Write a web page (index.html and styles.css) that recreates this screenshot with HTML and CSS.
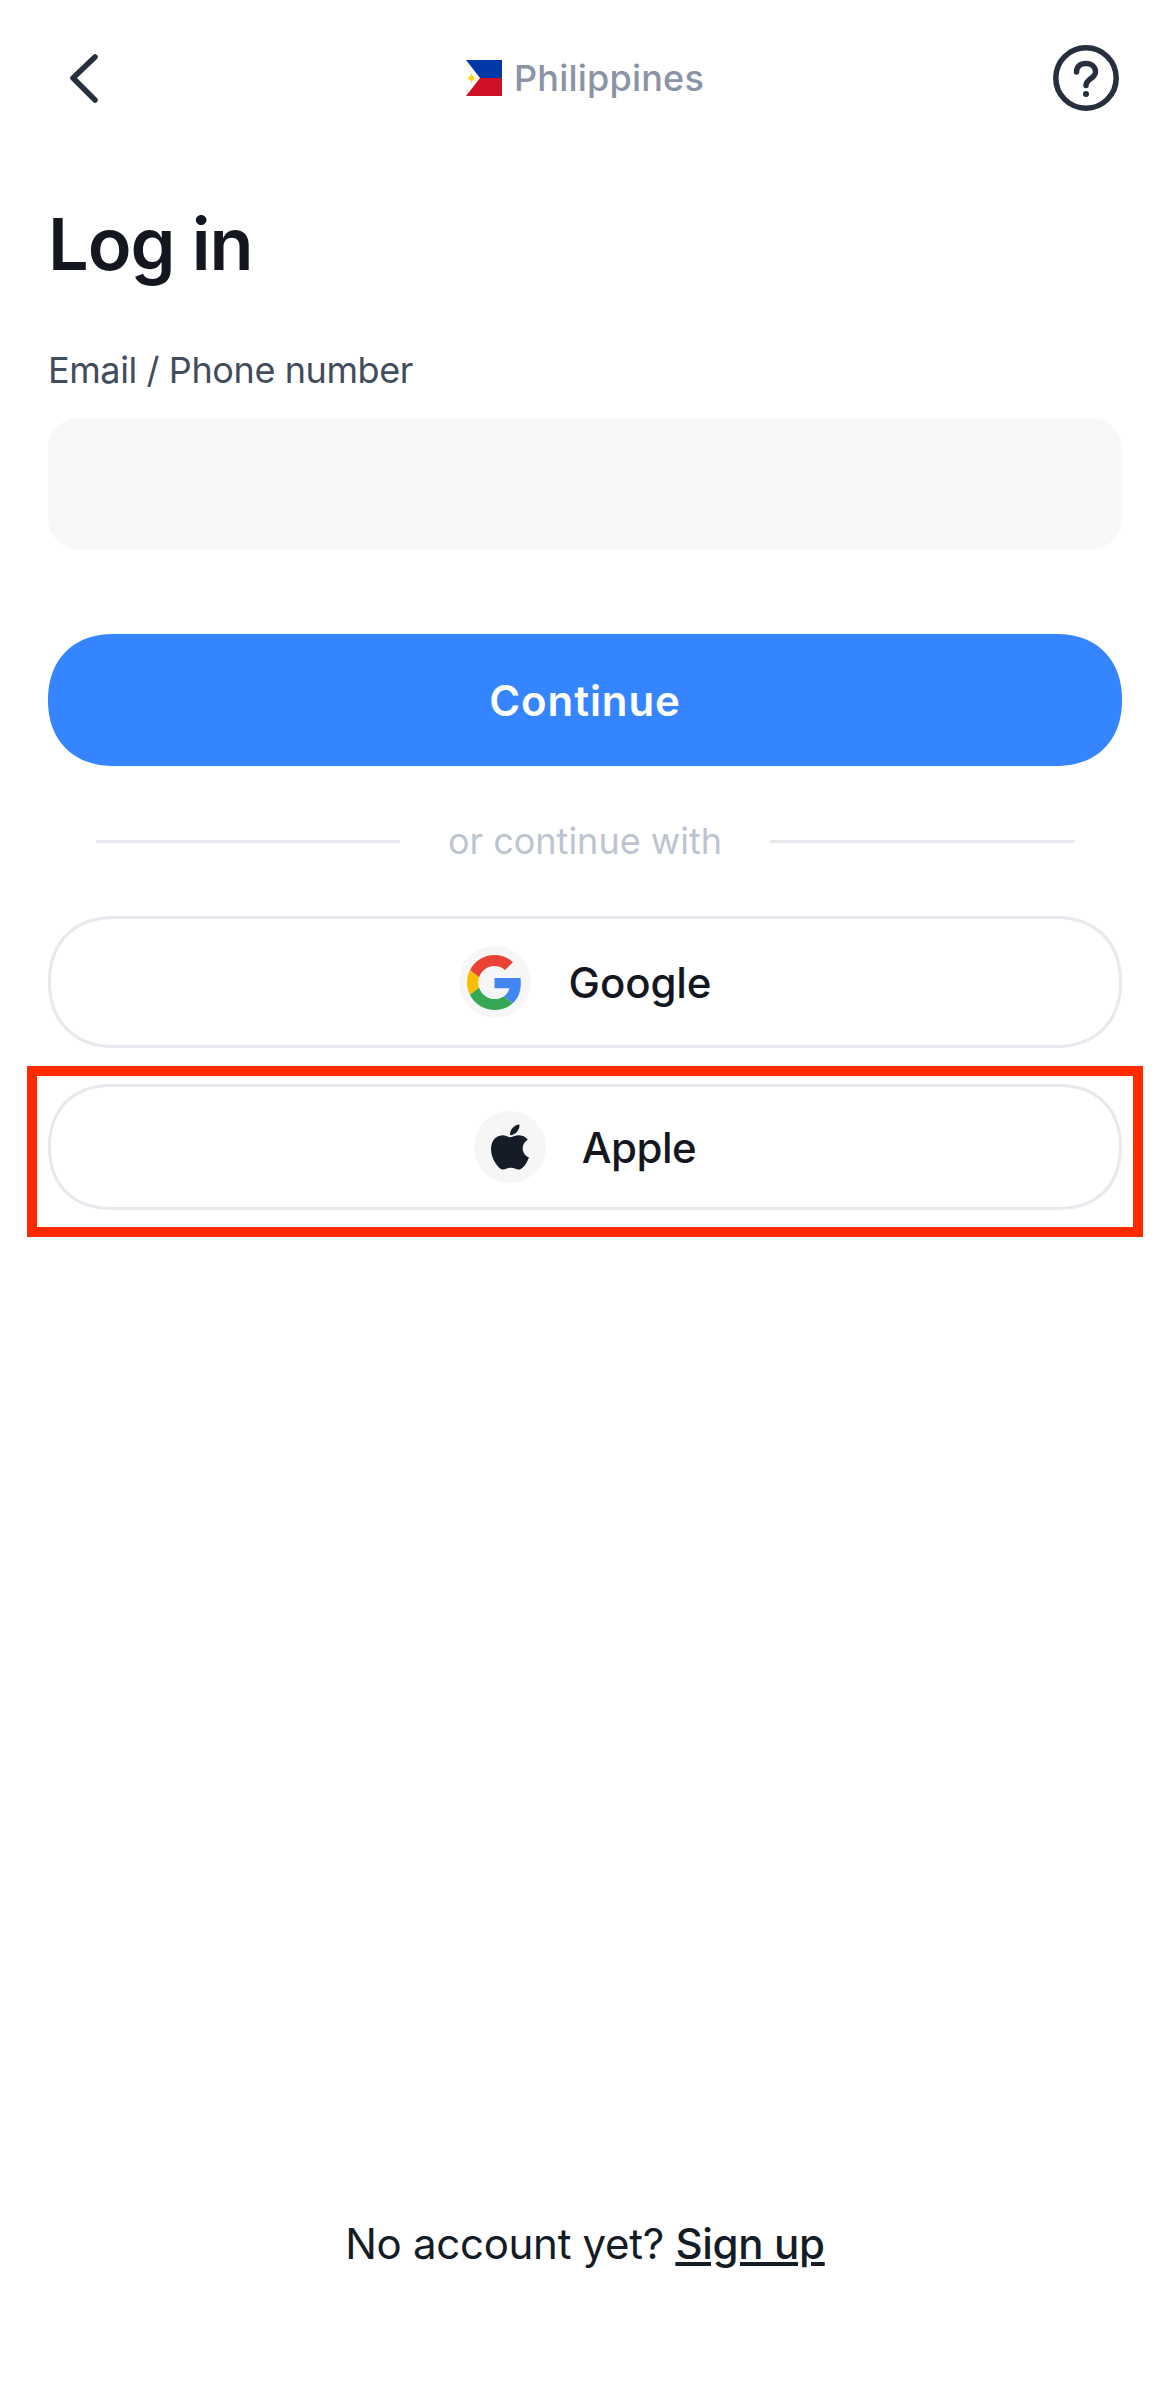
FILE: index.html
```html
<!DOCTYPE html>
<html lang="en">
<head>
    <meta charset="UTF-8">
    <meta name="viewport" content="width=device-width, initial-scale=1.0">
    <title>Log in</title>
    <link rel="stylesheet" href="styles.css">
</head>
<body>
    <div class="page">
        <div class="top-bar">
            <svg class="top-icon" viewBox="0 0 66 66" fill="none" stroke="#252f3d" stroke-width="5.5" stroke-linecap="round" stroke-linejoin="round">
                <path d="M44 12 L22 33 L44 55"/>
            </svg>
            <div class="country">
                <svg class="flag" viewBox="0 0 36 36">
                    <rect width="36" height="18" fill="#0038a8"/>
                    <rect y="18" width="36" height="18" fill="#ce1126"/>
                    <path d="M0 0 L14 18 L0 36 Z" fill="#fff"/>
                    <circle cx="5.5" cy="18" r="2.6" fill="#fcd116"/>
                    <path d="M5.5 13 V23 M1 18 H10" stroke="#fcd116" stroke-width="0.9"/>
                    <circle cx="1.4" cy="5" r="0.8" fill="#fcd116"/>
                    <circle cx="1.4" cy="31" r="0.8" fill="#fcd116"/>
                    <circle cx="12" cy="18" r="0.8" fill="#fcd116"/>
                </svg>
                <span>Philippines</span>
            </div>
            <svg class="top-icon" viewBox="0 0 66 66" fill="none" stroke="#252f3d" stroke-width="5.5" stroke-linecap="round">
                <circle cx="33" cy="33" r="30.2"/>
                <path d="M23.5 27 C23.5 21.5 27.5 18.5 33 18.5 C38.5 18.5 42.5 22 42.5 27 C42.5 33.5 33 33.5 33 40.5"/>
                <circle cx="33" cy="49" r="3" fill="#252f3d" stroke="none"/>
            </svg>
        </div>

        <h1 class="title">Log in</h1>

        <label class="field-label" for="account">Email / Phone number</label>
        <input class="field-input" id="account" type="text">

        <button class="continue-btn">Continue</button>

        <div class="divider">
            <span class="divider-line"></span>
            <span class="divider-text">or continue with</span>
            <span class="divider-line"></span>
        </div>

        <button class="social-btn google-btn">
            <span class="social-icon">
                <svg class="google-logo" viewBox="0 0 48 48">
                    <path fill="#EA4335" d="M24 9.5c3.54 0 6.71 1.22 9.21 3.6l6.85-6.85C35.9 2.38 30.47 0 24 0 14.62 0 6.51 5.38 2.56 13.22l7.98 6.19C12.43 13.72 17.74 9.5 24 9.5z"/>
                    <path fill="#4285F4" d="M46.98 24.55c0-1.57-.15-3.09-.38-4.55H24v9.02h12.94c-.58 2.96-2.26 5.48-4.78 7.18l7.73 6c4.51-4.18 7.09-10.36 7.09-17.65z"/>
                    <path fill="#FBBC05" d="M10.53 28.59c-.48-1.45-.76-2.99-.76-4.59s.27-3.14.76-4.59l-7.98-6.19C.92 16.46 0 20.12 0 24c0 3.88.92 7.54 2.56 10.78l7.97-6.19z"/>
                    <path fill="#34A853" d="M24 48c6.48 0 11.93-2.13 15.89-5.81l-7.73-6c-2.15 1.45-4.92 2.3-8.16 2.3-6.26 0-11.57-4.22-13.47-9.91l-7.98 6.19C6.51 42.62 14.62 48 24 48z"/>
                </svg>
            </span>
            <span>Google</span>
        </button>

        <div class="highlight">
            <button class="social-btn apple-btn">
                <span class="social-icon">
                    <svg class="apple-logo" viewBox="0 0 24 24">
                        <path fill="#141c28" d="M17.05 20.28c-.98.95-2.05.8-3.08.35-1.09-.46-2.09-.48-3.24 0-1.44.62-2.2.44-3.06-.35C2.79 15.25 3.51 7.59 9.05 7.31c1.35.07 2.29.74 3.08.8 1.18-.24 2.31-.93 3.57-.84 1.51.12 2.65.72 3.4 1.8-3.12 1.87-2.38 5.98.48 7.13-.57 1.5-1.31 2.99-2.54 4.09zM12.03 7.25c-.15-2.23 1.66-4.07 3.74-4.25.29 2.58-2.34 4.5-3.74 4.25z"/>
                    </svg>
                </span>
                <span>Apple</span>
            </button>
        </div>

        <p class="signup">No account yet? <a class="signup-link" href="#">Sign up</a></p>
    </div>
</body>
</html>
```

FILE: styles.css
```css
* {
    box-sizing: border-box;
}

body {
    margin: 0;
    font-family: Inter, "Noto Sans", sans-serif;
    background-color: #fff;
}

.page {
    display: flex;
    flex-direction: column;
    height: 2404px;
    padding: 45px 48px 0;
}

.top-bar {
    display: flex;
    align-items: center;
    justify-content: space-between;
    padding: 0 3px;
}

.top-icon {
    width: 66px;
    height: 66px;
}

.country {
    display: flex;
    align-items: center;
    gap: 12px;
    font-size: 36px;
    font-weight: 500;
    letter-spacing: 0.2px;
    color: #8a94a6;
}

.flag {
    width: 36px;
    height: 36px;
}

.title {
    margin: 89px 0 0;
    font-size: 72px;
    line-height: 88px;
    font-weight: 600;
    letter-spacing: -1px;
    color: #14171f;
}

.field-label {
    margin-top: 60px;
    font-size: 36px;
    line-height: 44px;
    font-weight: 400;
    letter-spacing: -0.4px;
    color: #414c5c;
}

.field-input {
    height: 131px;
    margin-top: 26px;
    border: none;
    border-radius: 30px;
    background-color: #f7f8fa;
}

.continue-btn {
    height: 132px;
    margin-top: 85px;
    border: none;
    border-radius: 66px;
    corner-shape: superellipse(1.15);
    background-color: #3485ff;
    color: #fff;
    font-family: inherit;
    font-size: 42px;
    font-weight: 600;
    letter-spacing: 0.9px;
}

.divider {
    display: flex;
    align-items: center;
    justify-content: space-between;
    height: 50px;
    margin: 50px 48px 0;
}

.divider-line {
    width: 304px;
    height: 3px;
    background-color: #e6e8ee;
}

.divider-text {
    font-size: 36px;
    font-weight: 400;
    color: #bcc4d0;
}

.social-btn {
    display: flex;
    align-items: center;
    justify-content: center;
    gap: 36px;
    width: 100%;
    height: 132px;
    margin-top: 50px;
    border: 3px solid #e8e9ef;
    border-radius: 66px;
    corner-shape: superellipse(1.15);
    background-color: #fff;
    color: #14171f;
    font-family: inherit;
    font-size: 42px;
    font-weight: 500;
    letter-spacing: -0.5px;
}

.google-btn {
    gap: 38px;
    letter-spacing: -0.1px;
}

.social-icon {
    display: flex;
    align-items: center;
    justify-content: center;
    width: 72px;
    height: 72px;
    border-radius: 50%;
    background-color: #f6f6f7;
}

.google-logo {
    width: 55px;
    height: 55px;
}

.apple-logo {
    width: 60px;
    height: 60px;
}

/* red annotation round the apple button */
.highlight {
    margin: 18px -21px 0;
    padding: 8px 11px 17px;
    border: 10px solid #ff2a00;
}

.apple-btn {
    height: 126px;
    margin-top: 0;
}

.signup {
    margin: auto 0 134px;
    text-align: center;
    font-size: 42px;
    line-height: 52px;
    letter-spacing: -0.3px;
    color: #141c26;
}

.signup-link {
    font-weight: 500;
    color: #141c26;
}
```
